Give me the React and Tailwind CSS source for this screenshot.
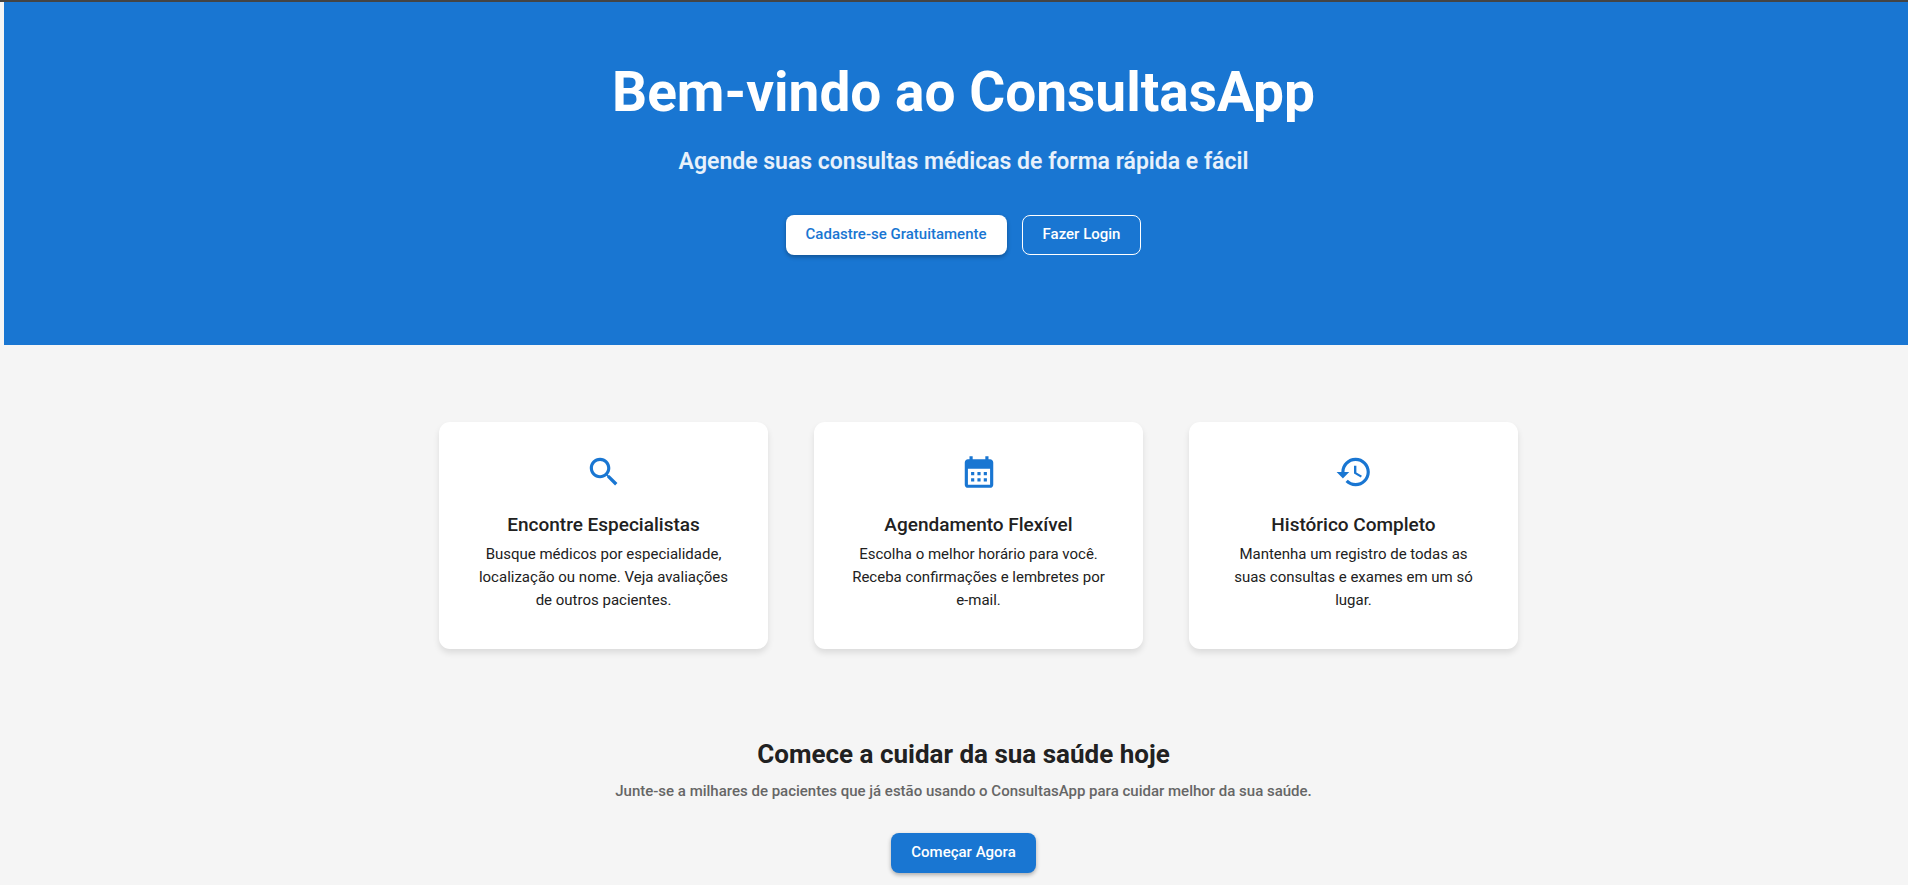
const features = [
  {
    title: 'Encontre Especialistas',
    text: 'Busque médicos por especialidade, localização ou nome. Veja avaliações de outros pacientes.',
    path: 'M15.5 14h-.79l-.28-.27C15.41 12.59 16 11.11 16 9.5 16 5.91 13.09 3 9.5 3S3 5.91 3 9.5 5.91 16 9.5 16c1.61 0 3.09-.59 4.23-1.57l.27.28v.79l5 4.99L20.49 19zm-6 0C7.01 14 5 11.99 5 9.5S7.01 5 9.5 5 14 7.01 14 9.5 11.99 14 9.5 14',
  },
  {
    title: 'Agendamento Flexível',
    text: 'Escolha o melhor horário para você. Receba confirmações e lembretes por e-mail.',
    path: 'M19 4h-1V2h-2v2H8V2H6v2H5c-1.11 0-1.99.9-1.99 2L3 20c0 1.1.89 2 2 2h14c1.1 0 2-.9 2-2V6c0-1.1-.9-2-2-2m0 16H5V10h14zM9 14H7v-2h2zm4 0h-2v-2h2zm4 0h-2v-2h2zm-8 4H7v-2h2zm4 0h-2v-2h2zm4 0h-2v-2h2z',
  },
  {
    title: 'Histórico Completo',
    text: 'Mantenha um registro de todas as suas consultas e exames em um só lugar.',
    path: 'M13 3c-4.97 0-9 4.03-9 9H1l3.89 3.89.07.14L9 12H6c0-3.87 3.13-7 7-7s7 3.13 7 7-3.13 7-7 7c-1.93 0-3.68-.79-4.94-2.06l-1.42 1.42C8.27 19.99 10.51 21 13 21c4.97 0 9-4.03 9-9s-4.03-9-9-9m-1 5v5l4.28 2.54.72-1.21-3.5-2.08V8z',
  },
];

function Feature({ title, text, path }) {
  return (
    <article className="flex flex-col items-center rounded-[11px] bg-white px-[34px] pt-[31px] pb-[37px] text-center shadow-[0_4px_6px_rgba(0,0,0,0.1)]">
      <svg viewBox="0 0 24 24" aria-hidden="true" className="size-[38px] fill-[#1976d2]">
        <path d={path} />
      </svg>
      <h3 className="mt-[19px] text-[19px] leading-[30px] font-medium">{title}</h3>
      <p className="mt-[3px] text-[15px] leading-[23px]">{text}</p>
    </article>
  );
}

export default function App() {
  return (
    <div className="min-h-screen overflow-x-hidden border-t-2 border-[#444444] bg-[#f5f5f5] pl-1 font-[Roboto,sans-serif] text-[#212121]">
      <header className="flex flex-col items-center bg-[#1976d2] pt-[57px] pb-[90px] pl-[15px] text-center text-white">
        <h1 className="text-[55px] leading-[67px] font-bold">Bem-vindo ao ConsultasApp</h1>
        <p className="mt-[20px] text-[23px] leading-[32px] font-semibold text-white/90">
          Agende suas consultas médicas de forma rápida e fácil
        </p>
        <div className="mt-[37px] flex flex-wrap justify-center gap-[15px]">
          <button className="h-10 rounded-lg bg-white px-[20px] pb-[2px] text-[15px] font-medium text-[#1976d2] shadow-[0_2px_4px_rgba(0,0,0,0.3)]">
            Cadastre-se Gratuitamente
          </button>
          <button className="h-10 rounded-lg border border-white px-[20px] pb-[2px] text-[15px] font-medium">
            Fazer Login
          </button>
        </div>
      </header>
      <main className="pl-[15px]">
        <section className="pt-[77px] pl-[30px]">
          <div className="mx-auto grid max-w-[1079px] grid-cols-1 gap-[46px] md:grid-cols-3">
            {features.map((feature) => (
              <Feature key={feature.title} {...feature} />
            ))}
          </div>
        </section>
        <section className="flex flex-col items-center pt-[87px] text-center">
          <h2 className="text-[26px] leading-[36px] font-bold">Comece a cuidar da sua saúde hoje</h2>
          <p className="mt-[8px] text-[15px] leading-[23px] font-medium text-[#666666]">
            Junte-se a milhares de pacientes que já estão usando o ConsultasApp para cuidar melhor da sua saúde.
          </p>
          <button className="mt-[30px] mb-2 h-10 rounded-lg bg-[#1976d2] px-[20px] pb-[2px] text-[15px] font-medium text-white shadow-[0_2px_4px_rgba(0,0,0,0.3)]">
            Começar Agora
          </button>
        </section>
      </main>
    </div>
  );
}
